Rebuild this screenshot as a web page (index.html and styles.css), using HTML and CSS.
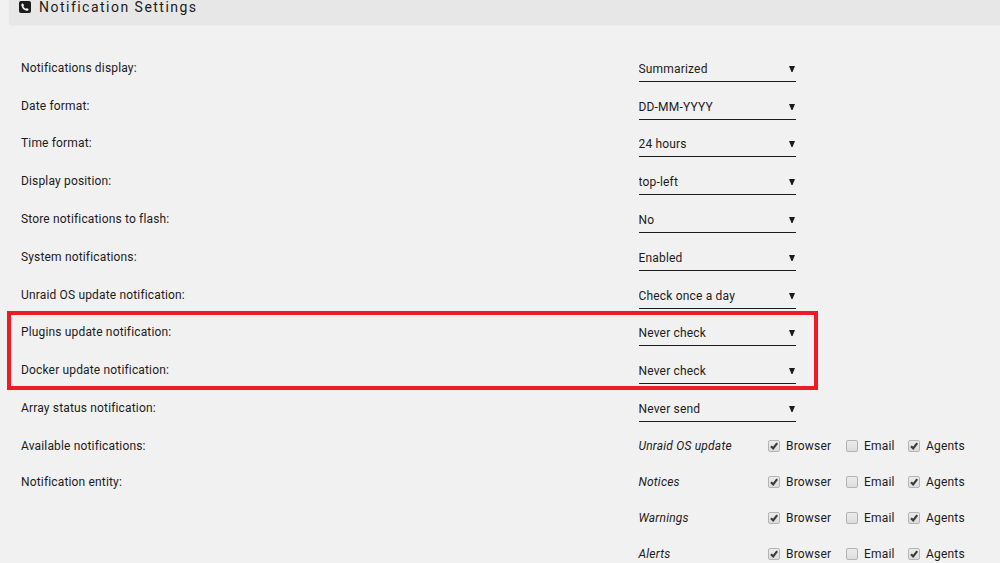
FILE: index.html
```html
<!DOCTYPE html>
<html lang="en">
  <head>
    <meta charset="UTF-8" />
    <meta name="viewport" content="width=device-width, initial-scale=1.0" />
    <title>Notification Settings</title>
    <link rel="stylesheet" href="styles.css">
  </head>
  <body>
    <!-- Page title bar -->
    <div class="title">
      <svg class="title-icon" viewBox="0 0 12 12">
        <rect width="12" height="12" rx="2" fill="#1c1b1b" />
        <path d="M3.5 2.2 L2.3 3.2 C2.3 6.8 5.2 9.8 8.8 9.8 L9.8 8.6 L8 7 L6.8 7.7 C5.7 7.2 4.8 6.3 4.4 5.2 L5.1 4.1 Z" fill="#f2f2f2" />
      </svg>
      <h1>Notification Settings</h1>
    </div>

    <!-- Settings form -->
    <form class="settings" id="settingsForm"></form>

    <div class="highlight"></div>

    <script src="script.js"></script>
  </body>
</html>
```

FILE: styles.css
```css
* {
  margin: 0;
  padding: 0;
  box-sizing: border-box;
}

body {
  height: 563px;
  overflow: hidden;
  position: relative;
  background-color: #f1f1f1;
  color: #1c1b1b;
  font-family: Roboto, "Liberation Sans", sans-serif;
  font-size: 12px;
  letter-spacing: 0.2px;
}

/* Title bar */
.title {
  display: flex;
  align-items: center;
  height: 26px;
  margin-left: 9px;
  padding: 0 0 11px 10px;
  background-color: #e7e7e7;
  border-bottom: 1px solid #ebebeb;
}

.title-icon {
  width: 12px;
  height: 12px;
  margin-right: 8px;
}

.title h1 {
  font-size: 14px;
  font-weight: normal;
  letter-spacing: 1.48px;
  white-space: nowrap;
}

/* Settings rows */
.settings {
  padding: 23px 0 0 21px;
}

.row {
  display: flex;
  align-items: center;
  height: 37.8px;
}

.row.checks {
  height: 35.9px;
  padding-top: 2px;
}

.label {
  width: 617.5px;
  letter-spacing: 0.16px;
}

.select {
  position: relative;
  width: 157px;
  height: 28px;
}

.select select {
  width: 100%;
  height: 28px;
  padding-top: 3px;
  appearance: none;
  background: none;
  border: none;
  border-bottom: 1px solid #1c1b1b;
  border-radius: 0;
  color: inherit;
  font: inherit;
  letter-spacing: 0.18px;
}

.arrow {
  position: absolute;
  right: 1px;
  top: 12px;
  width: 6px;
  height: 6px;
}

.entity {
  width: 129.5px;
  font-style: italic;
}

.check {
  display: flex;
  align-items: center;
}

.box {
  display: block;
  width: 12px;
  height: 12px;
  margin-right: 6px;
  border: 1px solid #b4b4b4;
  border-radius: 2px;
  background: linear-gradient(#ececec, #dcdcdc);
}

.browser {
  width: 78px;
}

.email {
  width: 62px;
}

/* Marked area */
.highlight {
  position: absolute;
  left: 7px;
  top: 311px;
  width: 811px;
  height: 79px;
  border: 4px solid #ed1c24;
}
```

FILE: script.js
```js
const selects = [
  ["Notifications display:", "Summarized"],
  ["Date format:", "DD-MM-YYYY"],
  ["Time format:", "24 hours"],
  ["Display position:", "top-left"],
  ["Store notifications to flash:", "No"],
  ["System notifications:", "Enabled"],
  ["Unraid OS update notification:", "Check once a day"],
  ["Plugins update notification:", "Never check"],
  ["Docker update notification:", "Never check"],
  ["Array status notification:", "Never send"],
];

const entities = [
  ["Available notifications:", "Unraid OS update"],
  ["Notification entity:", "Notices"],
  ["", "Warnings"],
  ["", "Alerts"],
];

function check(name, text, checked) {
  const mark = checked
    ? '<path d="M2 5.2 L4.2 7.4 L8.2 2.2" fill="none" stroke="#3c3c3c" stroke-width="2.2" />'
    : "";
  return `<span class="check ${name}"><svg class="box" viewBox="0 0 10 10">${mark}</svg><span>${text}</span></span>`;
}

const form = document.getElementById("settingsForm");

selects.forEach(function ([label, value]) {
  form.innerHTML += `
    <div class="row">
      <span class="label">${label}</span>
      <span class="select">
        <select><option>${value}</option></select>
        <svg class="arrow" viewBox="0 0 6 6"><path d="M0 0H6L3.5 6H2.5Z" fill="#1c1b1b" /></svg>
      </span>
    </div>`;
});

entities.forEach(function ([label, entity]) {
  form.innerHTML += `
    <div class="row checks">
      <span class="label">${label}</span>
      <span class="entity">${entity}</span>
      ${check("browser", "Browser", true)}
      ${check("email", "Email", false)}
      ${check("agents", "Agents", true)}
    </div>`;
});
```
